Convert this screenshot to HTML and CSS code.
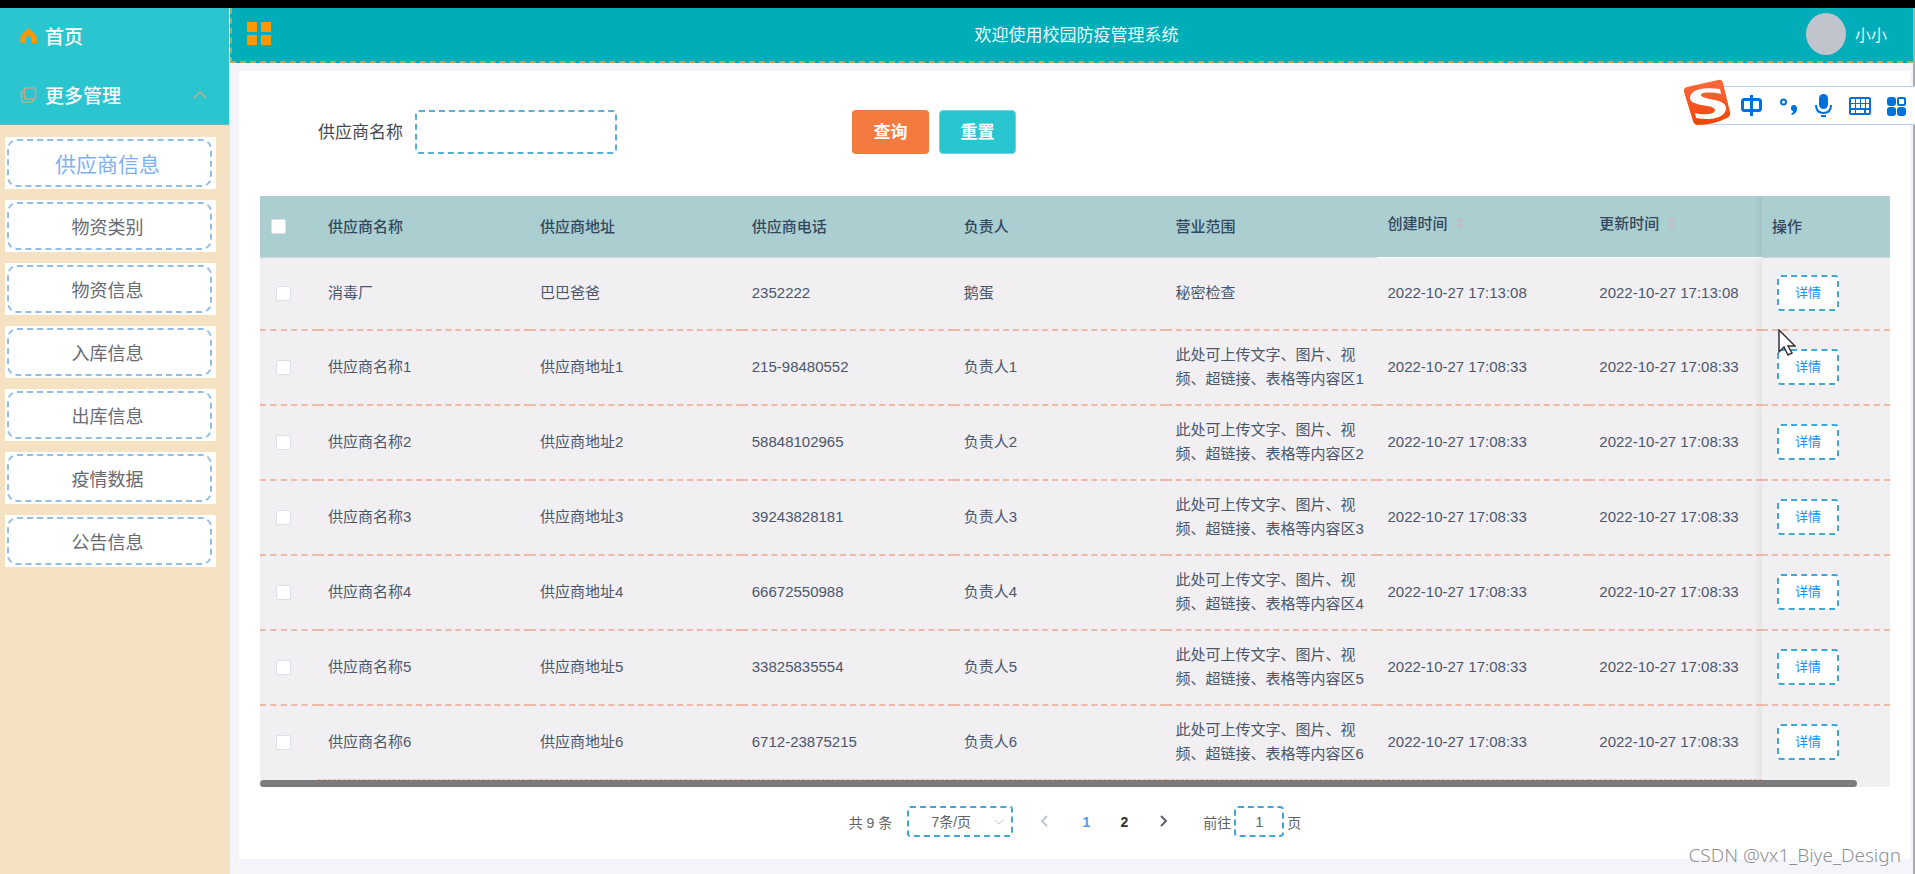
FILE: index.html
```html
<!DOCTYPE html>
<html lang="zh-CN">
<head>
  <meta charset="UTF-8">
  <title>校园防疫管理系统</title>
  <link rel="stylesheet" href="styles.css">
</head>
<body>
  <div class="topStrip"></div>
  <div class="layout">
    <nav class="sidebar">
      <div class="menuTop">
        <a class="menuMain" href="#">
          <svg class="menuIcon" viewBox="0 0 16 16"><path fill="#ff9800" d="M8 0 16 8v7h-5v-4a3 3 0 0 0-6 0v4H0V8z"/></svg>
          <span>首页</span>
        </a>
        <a class="menuMain" href="#">
          <svg class="menuIcon" viewBox="0 0 16 16" fill="none" stroke="#c2a98c" stroke-width="1.5"><rect x="4" y="1" width="11" height="11" rx="1.5"/><path d="M4 4H2.500Q1 4 1 5.500V13.500Q1 15 2.500 15H11Q12 15 12.500 12.500"/></svg>
          <span>更多管理</span>
          <svg class="menuArrow" viewBox="0 0 14 8" fill="none" stroke="#c2a98c" stroke-width="1.500"><path d="M1 7 7 1l6 6"/></svg>
        </a>
      </div>
      <div class="subMenu">
        <a class="subItem" href="#"><span class="subText active">供应商信息</span></a>
        <a class="subItem" href="#"><span class="subText">物资类别</span></a>
        <a class="subItem" href="#"><span class="subText">物资信息</span></a>
        <a class="subItem" href="#"><span class="subText">入库信息</span></a>
        <a class="subItem" href="#"><span class="subText">出库信息</span></a>
        <a class="subItem" href="#"><span class="subText">疫情数据</span></a>
        <a class="subItem" href="#"><span class="subText">公告信息</span></a>
      </div>
    </nav>

    <div class="main">
      <header class="header">
        <button type="button" class="gridButton" aria-label="菜单">
          <svg width="24" height="24" viewBox="0 0 24 24" fill="#ff9800"><path d="M0 0h10v10H0zM14 0h10v10H14zM0 13h10v10H0zM14 13h10v10H14z"/></svg>
        </button>
        <div class="title">欢迎使用校园防疫管理系统</div>
        <div class="user">
          <svg class="avatar" viewBox="0 0 40 42"><ellipse cx="20" cy="21" rx="20" ry="21" fill="#c0c4cc"/><path d="M11 29a7 7 0 0 1-1-13c1-12 18-13 20-1 8 1 9 13 1 14zM20 30v7M15 32v3M25 32v3" fill="none" stroke="#c9c6cc"/></svg>
          <span>小小</span>
        </div>
      </header>

      <div class="card">
        <form class="search">
          <label for="supplierName">供应商名称</label>
          <input type="text" id="supplierName" name="supplierName">
          <div class="searchButtons">
            <button type="button" class="queryButton">查询</button>
            <button type="reset" class="resetButton">重置</button>
          </div>
        </form>

        <table class="table">
          <colgroup>
            <col class="colCheck">
            <col class="colData"><col class="colData"><col class="colData">
            <col class="colData"><col class="colData"><col class="colData">
            <col>
            <col class="colAction">
          </colgroup>
          <thead>
            <tr>
              <th class="checkCell"><input type="checkbox" aria-label="全选"></th>
              <th>供应商名称</th>
              <th>供应商地址</th>
              <th>供应商电话</th>
              <th>负责人</th>
              <th>营业范围</th>
              <th class="sortable">创建时间 <svg class="sortIcon" viewBox="0 0 10 12"><path d="M5 0l4 5H1zM5 12l4-5H1z"/></svg></th>
              <th class="sortable">更新时间 <svg class="sortIcon" viewBox="0 0 10 12"><path d="M5 0l4 5H1zM5 12l4-5H1z"/></svg></th>
              <th class="action">操作</th>
            </tr>
          </thead>
          <tbody id="supplierRows"></tbody>
        </table>
        <div class="scrollTrack"><div class="scrollThumb"></div></div>

        <div class="pagination">
          <span>共 9 条</span>
          <select class="pageSize" aria-label="每页条数"><option>7条/页</option></select>
          <button type="button" class="pageButton prev" aria-label="上一页" disabled>
            <svg width="8" height="12" viewBox="0 0 8 12"><path d="M7 1 2 6l5 5"/></svg>
          </button>
          <button type="button" class="pageButton current">1</button>
          <button type="button" class="pageButton">2</button>
          <button type="button" class="pageButton next" aria-label="下一页">
            <svg width="8" height="12" viewBox="0 0 8 12"><path d="M1 1l5 5-5 5"/></svg>
          </button>
          <label for="jumpPage">前往</label>
          <input type="text" id="jumpPage" value="1">
          <span>页</span>
        </div>
      </div>
    </div>
  </div>

  <!-- 输入法工具条 -->
  <div class="ime">
    <svg width="232" height="48" viewBox="0 0 232 48">
      <defs>
        <linearGradient id="imeRed" x1="0" y1="0" x2="0" y2="1"><stop offset="0" stop-color="#ff6a3d"/><stop offset="1" stop-color="#f04408"/></linearGradient>
      </defs>
      <path d="M20 7.500H240V45.500H20z" fill="#fff" stroke="#bccfe6"/>
      <path d="M4 8 35 1q4-1 5 3l7 29q1 4-3 6-14 7-29 7-4 0-5-4L1 13q-1-4 3-5z" fill="url(#imeRed)"/>
      <path d="M37 10C24 8 7 9 7 19c0 9 25 6 25 12 0 5-13 5-20 3l1 5c14 3 30 0 30-10 0-10-25-8-25-13 0-3 10-3 20-1z" fill="#fff"/>
      <g fill="none" stroke="#0070dc" stroke-width="3">
        <rect x="59.500" y="20.500" width="18" height="11" rx="2"/>
        <path d="M68.500 16v21"/>
        <circle cx="100.500" cy="23" r="2.500" stroke-width="2"/>
        <path d="M133 26q0 8 7.500 8t7.500-8M140.500 34v1" stroke-width="2"/>
      </g>
      <g fill="#0070dc">
        <path d="M108 29q0-3 3-3t3 4q0 4-5 6l-1-1q3-2 2-3-2 0-2-3z"/>
        <rect x="136" y="15" width="9" height="15" rx="4.500"/>
        <rect x="138" y="36" width="5" height="2"/>
        <rect x="166" y="18" width="22" height="18" rx="2"/>
        <rect x="204" y="18" width="9" height="9" rx="3"/>
        <rect x="204" y="28" width="9" height="9" rx="3"/>
        <rect x="214" y="28" width="9" height="9" rx="3"/>
      </g>
      <rect x="215" y="19" width="7" height="7" rx="1" fill="none" stroke="#0070dc" stroke-width="2"/>
      <path d="M168 20h4v4h-4zM173 20h4v4h-4zM178 20h4v4h-4zM183 20h3v4h-3zM168 25h4v4h-4zM173 25h4v4h-4zM178 25h4v4h-4zM183 25h3v4h-3zM168 31h4v3h-4zM173 31h8v3h-8zM183 31h3v3h-3z" fill="#fff"/>
    </svg>
  </div>
  <svg class="cursor" viewBox="0 0 18 28"><path d="M1 1v22l5-5 4 8 4-2-4-7h7z" fill="#fff" stroke="#33333d" stroke-width="1.500"/></svg>
  <div class="watermark">CSDN @vx1_Biye_Design</div>

  <script src="script.js"></script>
</body>
</html>
```
FILE: styles.css
```css
* {
  box-sizing: border-box;
}
body {
  margin: 0;
  position: relative;
  min-height: 100vh;
  display: flex;
  flex-direction: column;
  overflow: hidden;
  font-family: "Liberation Sans", "Noto Sans CJK SC", sans-serif;
  background-color: #f6f4fb;
}
button, input, select {
  font-family: inherit;
}
a {
  text-decoration: none;
}
.topStrip {
  height: 8px;
  background-color: #000000;
}
.layout {
  display: flex;
  flex: 1;
  border-right: 2px solid #a9a9ae;
}

/* 左侧菜单 */
.sidebar {
  width: 230px;
  flex: none;
  background-color: #f5e2c3;
  border-right: 1px solid #e6e6ea;
}
.menuTop {
  height: 117px;
  background-color: #2bc5d0;
  border-bottom: 1px solid #6fb8b4;
}
.menuMain {
  display: flex;
  align-items: center;
  height: 59px;
  padding: 0 22px 4px 20px;
  gap: 8px;
  font-size: 19px;
  font-weight: 500;
  color: #ffffff;
}
.menuIcon {
  width: 17px;
  height: 16px;
}
.menuArrow {
  width: 14px;
  height: 8px;
  margin-left: auto;
}
.subMenu {
  display: flex;
  flex-direction: column;
  gap: 11px;
  padding: 12px 13px 0 5px;
}
.subItem {
  display: block;
  height: 52px;
  padding: 2px 4px 2px 2px;
  background-color: #ffffff;
}
.subText {
  display: flex;
  align-items: center;
  justify-content: center;
  height: 48px;
  padding-right: 4px;
  border: 2px dashed #94bde2;
  border-radius: 10px;
  font-size: 18px;
  color: #666a73;
}
.subText.active {
  font-size: 21px;
  color: #7fb0ee;
}

/* 顶部 */
.main {
  flex: 1;
  display: flex;
  flex-direction: column;
}
.header {
  display: flex;
  align-items: center;
  justify-content: space-between;
  height: 55px;
  padding: 0 26px 2px 15px;
  background-color: #00adb9;
  border-left: 2px dashed #b5a65c;
  border-bottom: 2px dashed #b5a65c;
  color: #e9fbfc;
}
.gridButton {
  display: flex;
  width: 100px;
  padding: 0;
  border: none;
  background: none;
}
.title {
  font-size: 17px;
}
.user {
  display: flex;
  align-items: center;
  gap: 9px;
  font-size: 16px;
}
.avatar {
  width: 40px;
  height: 42px;
}

.card {
  margin: 8px 3px 0 9px;
  height: 788px;
  padding: 39px 20px 0 21px;
  background-color: #ffffff;
}
.search {
  display: flex;
  align-items: center;
  padding-left: 58px;
  margin-bottom: 42px;
  font-size: 17px;
  color: #444950;
}
.search label {
  padding-bottom: 4px;
}
.search input {
  width: 202px;
  height: 44px;
  margin-left: 12px;
  padding: 0 12px;
  border: 2px dashed #5aaed0;
  border-radius: 4px;
}
.searchButtons {
  display: flex;
  gap: 10px;
  margin-left: 235px;
}
.searchButtons button {
  width: 77px;
  height: 44px;
  padding: 0 0 3px;
  border: 1px solid transparent;
  border-radius: 4px;
  font-size: 17px;
  font-weight: 700;
  color: #ffffff;
}
.searchButtons .queryButton {
  background-color: #f37b3f;
}
.searchButtons .resetButton {
  background-color: #2bc5d0;
  border-color: #6fd6dc;
}

/* 表格 */
.table {
  width: 100%;
  table-layout: fixed;
  border-collapse: separate;
  border-spacing: 0;
  font-size: 15px;
  line-height: 24px;
  color: #4a576b;
}
.colCheck {
  width: 58px;
}
.colData {
  width: 13%;
}
.colAction {
  width: 128px;
}
.table th {
  height: 62px;
  padding: 0 10px;
  background-color: #abced0;
  border-bottom: 1px solid #c3dadd;
  text-align: left;
  font-weight: 500;
  color: #33485e;
}
.table .sortable {
  padding-bottom: 5px;
  border-bottom-color: #ffffff;
}
.sortIcon {
  width: 10px;
  height: 12px;
  margin-left: 3px;
  fill: #c3bcca;
}
.table td {
  height: 75px;
  padding: 0 10px 2px;
  background-color: #f1eff2;
  border-bottom: 2px dashed #efb9a8;
}
.table tbody tr:first-child td {
  height: 73px;
}
.table tbody tr:last-child td {
  height: 74px;
  border-bottom-width: 1px;
}
.table .checkCell {
  padding: 0 0 0 16px;
}
.table th.checkCell {
  padding-left: 11px;
}
.table tbody tr:last-child .checkCell,
.table tbody tr:last-child .action {
  border-bottom-color: #f1eff2;
}
.checkCell input {
  appearance: none;
  display: block;
  width: 15px;
  height: 15px;
  margin: 0;
  background-color: #ffffff;
  border: 1px solid #dcdfe6;
  border-radius: 2px;
}
.table .action {
  box-shadow: -4px 0 6px rgba(0, 0, 0, 0.05);
  clip-path: inset(0 0 0 -12px);
}
.table td.action {
  padding-left: 15px;
}
.detailButton {
  display: block;
  width: 62px;
  height: 36px;
  padding: 0 0 2px;
  background-color: #ffffff;
  border: 2px dashed #3fa9d6;
  border-radius: 4px;
  font-size: 13px;
  color: #1492f5;
}
.scrollTrack {
  background-color: #f1eff2;
}
.scrollThumb {
  width: 98%;
  height: 7px;
  border-radius: 4px;
  background-color: #7b7a7d;
}

/* 分页 */
.pagination {
  display: flex;
  align-items: center;
  justify-content: center;
  margin-top: 19px;
  font-size: 14px;
  color: #606266;
}
.pageSize {
  appearance: none;
  width: 106px;
  height: 31px;
  margin: 0 12px 0 15px;
  padding: 0 18px 0 0;
  border: 2px dashed #45a5d2;
  border-radius: 3px;
  background: #ffffff url("data:image/svg+xml,%3Csvg xmlns='http://www.w3.org/2000/svg' width='10' height='6'%3E%3Cpath d='M1 1l4 4 4-4' fill='none' stroke='%23c0c4cc'/%3E%3C/svg%3E") no-repeat right 7px center;
  font-size: 14px;
  text-align: center;
  text-align-last: center;
  color: #606266;
}
.pageButton {
  width: 38px;
  height: 30px;
  padding: 0;
  border: none;
  background: none;
  font-size: 14px;
  font-weight: 700;
  color: #303133;
}
.pageButton svg {
  fill: none;
  stroke: #606266;
  stroke-width: 2;
}
.pageButton:disabled svg {
  stroke: #c0c4cc;
}
.pageButton.current {
  color: #5b95f0;
}
.pageButton.prev {
  margin-right: 4px;
}
.pageButton.next {
  margin: 0 20px 0 2px;
}
#jumpPage {
  width: 50px;
  height: 31px;
  margin: 0 3px;
  padding: 0;
  border: 2px dashed #45a5d2;
  border-radius: 4px;
  font-size: 14px;
  text-align: center;
  color: #606266;
}

/* 浮层 */
.ime {
  position: absolute;
  top: 79px;
  right: 0;
  height: 48px;
}
.cursor {
  position: absolute;
  top: 329px;
  right: 119px;
  width: 18px;
  height: 28px;
}
.watermark {
  position: absolute;
  right: 14px;
  bottom: 4px;
  font-family: "Noto Sans", sans-serif;
  font-size: 19px;
  font-weight: 300;
  line-height: 30px;
  color: #8f8f93;
  text-shadow: -1px -1px 0 #ffffff;
}
```
FILE: script.js
```javascript
const phones = ['2352222', '215-98480552', '58848102965', '39243828181', '66672550988', '33825835554', '6712-23875215'];

// 第一行为手动添加的数据，其余按编号生成
const suppliers = phones.map((phone, i) => {
  if (i === 0) {
    return ['消毒厂', '巴巴爸爸', phone, '鹅蛋', '秘密检查', '2022-10-27 17:13:08'];
  }
  return ['供应商名称' + i, '供应商地址' + i, phone, '负责人' + i,
    '此处可上传文字、图片、视频、超链接、表格等内容区' + i, '2022-10-27 17:08:33'];
});

document.getElementById('supplierRows').innerHTML = suppliers.map(row => `
  <tr>
    <td class="checkCell"><input type="checkbox" aria-label="选择${row[0]}"></td>
    ${row.map(value => `<td>${value}</td>`).join('')}
    <td>${row[5]}</td>
    <td class="action"><button type="button" class="detailButton">详情</button></td>
  </tr>`).join('');
```
